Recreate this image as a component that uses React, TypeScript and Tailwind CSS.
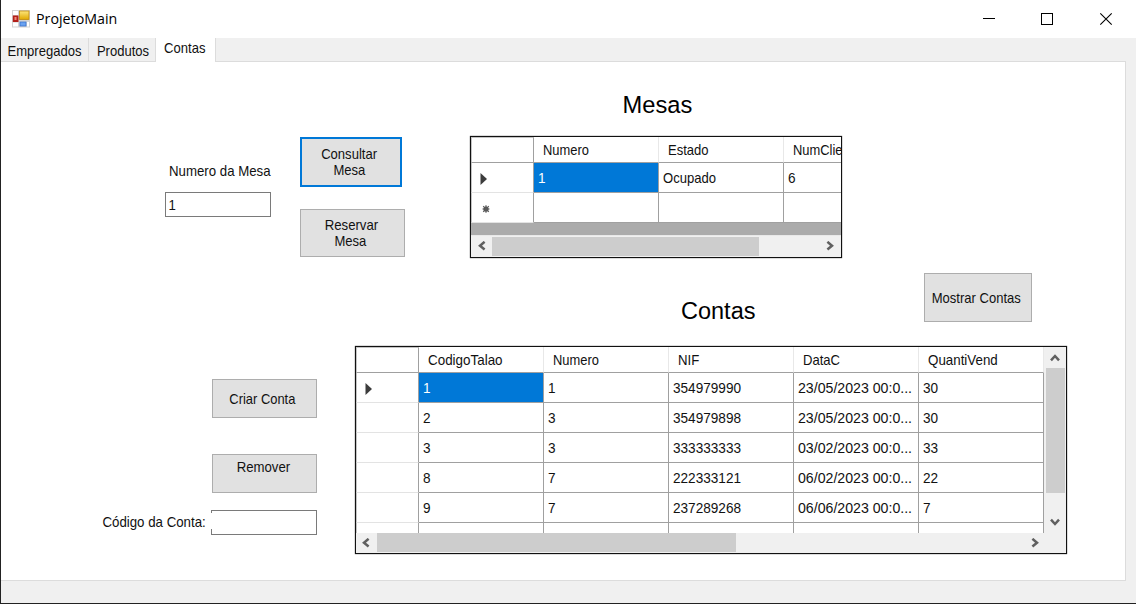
import type { ReactNode } from "react";

type Dir = "left" | "right" | "up" | "down";

const chevrons: Record<Dir, string> = {
  left: "M7.6 0.8 3 4.7l4.6 3.8",
  right: "M2.4 0.8 7 4.7 2.4 8.5",
  up: "M1 7.3 5 3l4 4.3",
  down: "M1 2.7 5 7l4-4.3",
};

function Chevron({ dir }: { dir: Dir }) {
  return (
    <svg width="10" height="10" viewBox="0 0 10 10" className="shrink-0">
      <path d={chevrons[dir]} fill="none" stroke="#606060" strokeWidth="2.5" />
    </svg>
  );
}

function Text({ children, className = "scale-x-[0.88]" }: { children: ReactNode; className?: string }) {
  return <span className={`inline-block whitespace-nowrap ${className}`}>{children}</span>;
}

function Button({ className, children }: { className: string; children: ReactNode }) {
  return (
    <button className={`flex flex-col items-center bg-[#e1e1e1] leading-4 ${className}`}>{children}</button>
  );
}

function HeaderCell({ children, scale }: { children: ReactNode; scale: string }) {
  return (
    <div className="flex h-[26px] w-[125px] shrink-0 items-center border-r border-b border-r-[#e8e8e8] border-b-[#a0a0a0] pt-px pl-[9px]">
      <Text className={`origin-left ${scale}`}>{children}</Text>
    </div>
  );
}

function Cell({ children, selected, scale = "scale-x-[0.906]" }: { children?: ReactNode; selected?: boolean; scale?: string }) {
  return (
    <div
      className={`flex h-[30px] w-[125px] shrink-0 items-center border-r border-b border-[#a0a0a0] pt-px pl-1 ${
        selected ? "bg-[#0078d7] text-white" : "bg-white"
      }`}
    >
      <Text className={`origin-left ${scale}`}>{children}</Text>
    </div>
  );
}

function RowHeader({ mark }: { mark?: "current" | "new" }) {
  return (
    <div className="flex h-[30px] w-[63px] shrink-0 items-center border-r border-b border-l border-r-[#a0a0a0] border-b-[#e3e3e3] border-l-[#c4c4c4] pl-2">
      {mark === "current" && (
        <svg width="8" height="12" viewBox="0 0 8 12" className="mt-0.5">
          <path d="M0.5 0v12L7 6z" fill="#3c3c3c" />
        </svg>
      )}
      {mark === "new" && (
        <svg width="8" height="8" viewBox="0 0 8 8" className="mt-[3px] ml-0.5">
          <circle cx="4" cy="4" r="2.6" fill="#4a4a4a" />
          <path d="M4 0.3v7.4M0.5 4h7M1.2 1.2l5.6 5.6M6.8 1.2 1.2 6.8" stroke="#5a5a5a" strokeWidth="1.2" />
        </svg>
      )}
    </div>
  );
}

function Corner() {
  return (
    <div className="h-[26px] w-[63px] shrink-0 border-t border-r border-b border-l border-t-[#c4c4c4] border-r-[#a0a0a0] border-b-[#a0a0a0] border-l-[#c4c4c4]" />
  );
}

const contas = [
  ["1", "1", "354979990", "23/05/2023 00:0...", "30"],
  ["2", "3", "354979898", "23/05/2023 00:0...", "30"],
  ["3", "3", "333333333", "03/02/2023 00:0...", "33"],
  ["8", "7", "222333121", "06/02/2023 00:0...", "22"],
  ["9", "7", "237289268", "06/06/2023 00:0...", "7"],
];

function MesasGrid() {
  return (
    <div className="h-[122px] w-[372px] overflow-hidden border border-[#111] bg-white shadow-[0_0_1px_#333]">
      <div className="flex">
        <Corner />
        <HeaderCell scale="scale-x-[0.86]">Numero</HeaderCell>
        <HeaderCell scale="scale-x-[0.87]">Estado</HeaderCell>
        <div className="flex h-[26px] flex-1 items-center border-b border-[#a0a0a0] pt-px pl-[9px]">
          <Text className="w-12 origin-left scale-x-[0.86]">NumClie</Text>
        </div>
      </div>
      <div className="flex">
        <RowHeader mark="current" />
        <Cell selected>1</Cell>
        <Cell scale="scale-x-[0.87]">Ocupado</Cell>
        <Cell>6</Cell>
      </div>
      <div className="flex">
        <RowHeader mark="new" />
        <Cell />
        <Cell />
        <Cell />
      </div>
      <div className="h-[13px] border-b border-[#e8e8e8] bg-[#ababab]" />
      <div className="flex h-[21px] items-center bg-[#f0f0f0] pb-px">
        <div className="flex w-[21px] justify-center"><Chevron dir="left" /></div>
        <div className="h-[19px] w-[267px] bg-[#cdcdcd]" />
        <div className="flex flex-1 justify-end pr-1.5"><Chevron dir="right" /></div>
      </div>
    </div>
  );
}

function ContasGrid() {
  return (
    <div className="h-[208px] w-[712px] overflow-hidden border border-[#111] bg-white shadow-[0_0_1px_#333]">
      <div className="flex h-[186px]">
        <div className="w-[688px] overflow-hidden">
          <div className="flex">
            <Corner />
            <HeaderCell scale="scale-x-[0.894]">CodigoTalao</HeaderCell>
            <HeaderCell scale="scale-x-[0.86]">Numero</HeaderCell>
            <HeaderCell scale="scale-x-[0.88]">NIF</HeaderCell>
            <HeaderCell scale="scale-x-[0.87]">DataC</HeaderCell>
            <HeaderCell scale="scale-x-[0.89]">QuantiVend</HeaderCell>
          </div>
          {contas.map((row, r) => (
            <div key={r} className="flex">
              <RowHeader mark={r === 0 ? "current" : undefined} />
              {row.map((value, c) => (
                <Cell key={c} selected={r === 0 && c === 0} scale={c === 3 ? "scale-x-[0.943]" : "scale-x-[0.906]"}>
                  {value}
                </Cell>
              ))}
            </div>
          ))}
          <div className="flex">
            <RowHeader />
            <Cell />
            <Cell />
            <Cell />
            <Cell />
            <Cell />
          </div>
        </div>
        <div className="flex w-[22px] flex-col items-center bg-[#f0f0f0]">
          <div className="flex h-[21px] items-center"><Chevron dir="up" /></div>
          <div className="h-[125px] w-[19px] bg-[#cdcdcd]" />
          <div className="flex flex-1 items-end pb-1.5"><Chevron dir="down" /></div>
        </div>
      </div>
      <div className="flex h-5 items-center bg-[#f0f0f0] pb-px">
        <div className="flex w-[21px] justify-center pr-0.5"><Chevron dir="left" /></div>
        <div className="h-[19px] w-[359px] bg-[#cdcdcd]" />
        <div className="flex flex-1 justify-end pr-[26px]"><Chevron dir="right" /></div>
      </div>
    </div>
  );
}

function AppIcon() {
  return (
    <svg width="18" height="18" viewBox="0 0 18 18">
      <defs>
        <linearGradient id="gold" x1="0" y1="0" x2="0" y2="1">
          <stop offset="0" stopColor="#fde67c" />
          <stop offset="1" stopColor="#e0a800" />
        </linearGradient>
      </defs>
      <rect x="0" y="0" width="18" height="17.5" fill="#d3d3d3" />
      <path d="M1 1h5v4H1zM1 12.5h5v4H1zM15 12h2v4.5h-2z" fill="#fff" />
      <rect x="0.8" y="5.5" width="5.7" height="6.5" fill="#b3201a" />
      <rect x="2.5" y="7" width="2" height="3" fill="#f08a78" />
      <rect x="7.5" y="1" width="9.5" height="8.5" fill="url(#gold)" stroke="#c08a10" strokeWidth="0.8" />
      <rect x="8" y="12" width="6" height="4" fill="#6aa2f0" stroke="#3b74cf" strokeWidth="0.8" />
    </svg>
  );
}

export default function App() {
  return (
    <div className="flex h-[604px] w-[1136px] flex-col overflow-hidden border-b border-l border-[#222] bg-[#f0f0f0] font-['Liberation_Sans',Arial,sans-serif] text-[15px] leading-4 text-[#111]">
      <header className="flex h-[38px] shrink-0 items-center bg-white pl-[11px]">
        <AppIcon />
        <Text className="-mt-0.5 ml-1.5 origin-left scale-x-[0.95] font-['Open_Sans','Noto_Sans',sans-serif] text-[15px] text-black">ProjetoMain</Text>
        <svg width="130" height="14" viewBox="0 0 130 14" className="mr-[23px] ml-auto" fill="none" stroke="#000">
          <path d="M0 6.5h12M58.5 1.5h11v11h-11z" shapeRendering="crispEdges" />
          <path d="m117.3 1.3 11.4 11.4m0-11.4-11.4 11.4" strokeWidth="1.1" />
        </svg>
      </header>

      <nav className="flex h-6 shrink-0">
        <div className="flex w-[88px] items-center justify-center border-r border-b border-[#dcdcdc] pt-0.5 pl-px">
          <Text className="scale-x-[0.87]">Empregados</Text>
        </div>
        <div className="flex w-[67px] items-center justify-center border-r border-b border-[#dcdcdc] pt-0.5 pl-0.5">
          <Text className="scale-x-[0.87]">Produtos</Text>
        </div>
        <div className="flex w-[59px] justify-center bg-white pt-0.5 pr-0.5">
          <Text className="scale-x-[0.87]">Contas</Text>
        </div>
        <div className="mr-2.5 flex-1 border-b border-l border-[#dcdcdc]" />
      </nav>

      <main className="mr-2.5 h-[519px] shrink-0 border-r border-b border-[#dcdcdc] bg-white">
        <section className="flex h-[211px]">
          <div className="ml-[164px] w-[106px] pt-[101px]">
            <Text className="ml-1 origin-left scale-x-[0.883]">Numero da Mesa</Text>
            <div className="mt-[13px] flex h-[25px] w-[106px] items-center border border-[#7a7a7a] pl-0.5">
              <Text>1</Text>
            </div>
          </div>
          <div className="ml-7 flex w-[106px] flex-col items-start pt-[75px]">
            <Button className="ml-px h-[50px] w-[102px] justify-center border-2 border-[#0078d7]">
              <Text className="-ml-1 scale-x-[0.87]">Consultar</Text>
              <Text className="-ml-1 scale-x-[0.87]">Mesa</Text>
            </Button>
            <Button className="mt-[22px] ml-px h-12 w-[105px] justify-center border border-[#adadad]">
              <Text className="-ml-0.5 scale-x-[0.88]">Reservar</Text>
              <Text className="-ml-1 scale-x-[0.87]">Mesa</Text>
            </Button>
          </div>
          <div className="ml-[65px] pt-[30px]">
            <h2 className="mb-[18px] h-[26px] pl-[3px] text-center text-[23.7px] leading-[26px] text-black">Mesas</h2>
            <MesasGrid />
          </div>
        </section>

        <section className="flex">
          <div className="ml-[101px] flex w-[215px] flex-col items-end pt-[106px]">
            <Button className="h-[39px] w-[105px] justify-center border border-[#adadad]">
              <Text className="-ml-1 scale-x-[0.86]">Criar Conta</Text>
            </Button>
            <Button className="mt-9 h-[39px] w-[105px] border border-[#adadad] pt-1">
              <Text className="-ml-0.5 scale-x-[0.88]">Remover</Text>
            </Button>
            <div className="mt-[17px] flex">
              <Text className="mt-1 origin-right scale-x-[0.885]">Código da Conta:</Text>
              <div className="ml-[5px] flex h-[25px] w-[106px] flex-col justify-between border-t border-r border-b border-[#7a7a7a]">
                <span className="h-0.5 w-px bg-[#7a7a7a]" />
                <span className="h-[5px] w-px bg-[#7a7a7a]" />
              </div>
            </div>
          </div>
          <div className="ml-[37px]">
            <div className="flex h-[73px] items-start">
              <h2 className="mt-[25px] ml-[327px] w-[243px] text-[23.5px] leading-[26px] text-black">Contas</h2>
              <Button className="h-[49px] w-[108px] justify-center border border-[#adadad]">
                <Text className="-ml-1 scale-x-[0.868]">Mostrar Contas</Text>
              </Button>
            </div>
            <div className="ml-px">
              <ContasGrid />
            </div>
          </div>
        </section>
      </main>
    </div>
  );
}
